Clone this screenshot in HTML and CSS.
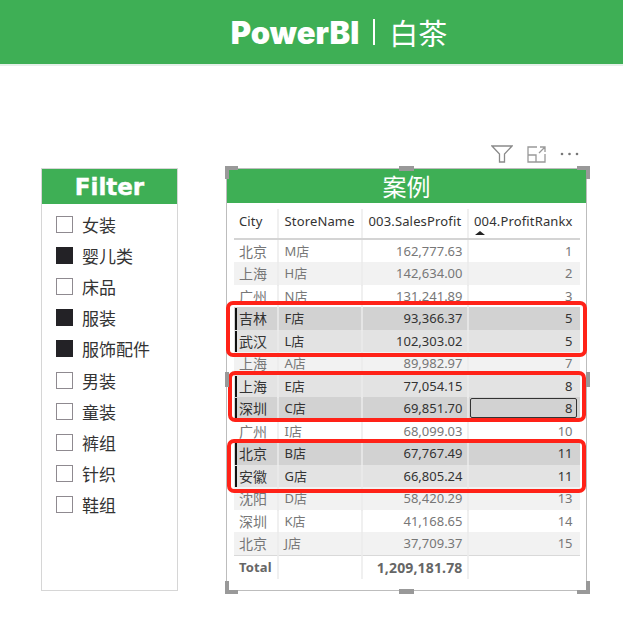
FILE: index.html
```html
<!DOCTYPE html>
<html lang="zh">
<head>
<meta charset="utf-8">
<title>PowerBI | 白茶</title>
<link rel="stylesheet" href="styles.css">
</head>
<body>
<header class="banner"><span class="brand">PowerBI</span><span class="pipe"></span><span class="brand-cn">白茶</span></header>
<main class="canvas">
  <section class="slicer">
    <h2 class="slicer-title">Filter</h2>
    <ul class="slicer-list">
      <li class="item"><span class="box"></span>女装</li>
      <li class="item"><span class="box on"></span>婴儿类</li>
      <li class="item"><span class="box"></span>床品</li>
      <li class="item"><span class="box on"></span>服装</li>
      <li class="item"><span class="box on"></span>服饰配件</li>
      <li class="item"><span class="box"></span>男装</li>
      <li class="item"><span class="box"></span>童装</li>
      <li class="item"><span class="box"></span>裤组</li>
      <li class="item"><span class="box"></span>针织</li>
      <li class="item"><span class="box"></span>鞋组</li>
    </ul>
  </section>
  <section class="visual">
    <div class="toolbar">
      <svg class="ico-filter" width="22" height="18" viewBox="0 0 22 18"><path d="M1 1H21L13.5 9V17H8.5V9Z" fill="none" stroke="#8a8a8a" stroke-width="1.3"/></svg>
      <svg class="ico-expand" width="19" height="17" viewBox="0 0 19 17"><path d="M10 1H1V16H18V8M1 9H9V16M12 7L18 1M13 1H18V6" fill="none" stroke="#999" stroke-width="1.3"/></svg>
      <svg class="ico-more" width="19" height="4" viewBox="0 0 19 4"><circle cx="2" cy="2" r="1.3" fill="#777"/><circle cx="9.5" cy="2" r="1.3" fill="#777"/><circle cx="17" cy="2" r="1.3" fill="#777"/></svg>
    </div>
    <h2 class="visual-title">案例</h2>
    <div class="grid">
      <div class="row head"><div class="c">City</div><div class="c">StoreName</div><div class="c">003.SalesProfit</div><div class="c sorted">004.ProfitRankx</div></div>
      <div class="row"><div class="c">北京</div><div class="c">M店</div><div class="c n">162,777.63</div><div class="c n">1</div></div>
      <div class="row alt"><div class="c">上海</div><div class="c">H店</div><div class="c n">142,634.00</div><div class="c n">2</div></div>
      <div class="row"><div class="c">广州</div><div class="c">N店</div><div class="c n">131,241.89</div><div class="c n">3</div></div>
      <div class="row dark"><div class="c">吉林</div><div class="c">F店</div><div class="c n">93,366.37</div><div class="c n">5</div></div>
      <div class="row light"><div class="c">武汉</div><div class="c">L店</div><div class="c n">102,303.02</div><div class="c n">5</div></div>
      <div class="row alt"><div class="c">上海</div><div class="c">A店</div><div class="c n">89,982.97</div><div class="c n">7</div></div>
      <div class="row light"><div class="c">上海</div><div class="c">E店</div><div class="c n">77,054.15</div><div class="c n">8</div></div>
      <div class="row dark"><div class="c">深圳</div><div class="c">C店</div><div class="c n">69,851.70</div><div class="c n focus">8</div></div>
      <div class="row"><div class="c">广州</div><div class="c">I店</div><div class="c n">68,099.03</div><div class="c n">10</div></div>
      <div class="row dark"><div class="c">北京</div><div class="c">B店</div><div class="c n">67,767.49</div><div class="c n">11</div></div>
      <div class="row light"><div class="c">安徽</div><div class="c">G店</div><div class="c n">66,805.24</div><div class="c n">11</div></div>
      <div class="row alt"><div class="c">沈阳</div><div class="c">D店</div><div class="c n">58,420.29</div><div class="c n">13</div></div>
      <div class="row"><div class="c">深圳</div><div class="c">K店</div><div class="c n">41,168.65</div><div class="c n">14</div></div>
      <div class="row alt"><div class="c">北京</div><div class="c">J店</div><div class="c n">37,709.37</div><div class="c n">15</div></div>
      <div class="row total"><div class="c">Total</div><div class="c"></div><div class="c n">1,209,181.78</div><div class="c n"></div></div>
    </div>
    <div class="mark mark-1"></div>
    <div class="mark mark-2"></div>
    <div class="mark mark-3"></div>
    <i class="corner tl"></i><i class="corner tr"></i><i class="corner bl"></i><i class="corner br"></i>
    <i class="grip top"></i><i class="grip bottom"></i><i class="grip left"></i><i class="grip right"></i>
  </section>
</main>
</body>
</html>
```
FILE: styles.css
```css
* { box-sizing: border-box; }
html, body { margin: 0; padding: 0; background: #fff; }
body {
  width: 623px;
  height: 642px;
  overflow: hidden;
  font-family: "Noto Sans", "Noto Sans CJK SC", sans-serif;
}
.banner {
  height: 66px;
  background: #3eaf55;
  border-bottom: 2px solid #e6f0ea;
  color: #fff;
  display: flex;
  align-items: center;
  justify-content: center;
  padding-left: 55px;
}
.brand {
  font-family: Inter, sans-serif;
  font-weight: 900;
  font-size: 31px;
}
.pipe {
  width: 2px;
  height: 26px;
  background: #fff;
  margin: 0 14px 0 14px;
}
.brand-cn {
  font-family: "Noto Sans CJK SC", sans-serif;
  font-size: 29px;
  font-weight: 400;
}
.canvas {
  display: flex;
  align-items: flex-start;
  gap: 48px;
  padding: 102px 0 0 41px;
}
.slicer {
  width: 137px;
  height: 423px;
  border: 1px solid #d6d6d6;
}
.slicer-title {
  margin: 0;
  height: 35px;
  background: #3eaf55;
  color: #fff;
  font-family: "DejaVu Sans", sans-serif;
  font-weight: 700;
  font-size: 23px;
  line-height: 37px;
  text-align: center;
  -webkit-text-stroke: 0.4px #fff;
}
.slicer-list {
  list-style: none;
  margin: 0;
  padding: 5px 0 0 14px;
}
.item {
  height: 31.1px;
  display: flex;
  align-items: center;
  gap: 9px;
  font-family: "Noto Sans CJK SC", sans-serif;
  font-size: 17px;
  color: #333;
}
.box {
  width: 17px;
  height: 17px;
  border: 1px solid #8f8a90;
  background: #fff;
  flex: none;
}
.box.on {
  background: #232226;
  border-color: #232226;
}
.visual {
  position: relative;
  width: 361px;
  height: 423px;
  border: 1.5px solid #bdbdbd;
}
.toolbar {
  position: absolute;
  left: 264px;
  top: -25px;
  width: 92px;
  height: 20px;
  display: flex;
  align-items: center;
  gap: 14px;
}
.ico-filter, .ico-expand, .ico-more { flex: none; }
.visual-title {
  margin: 0;
  height: 34px;
  background: #3eaf55;
  color: #fff;
  font-family: "Noto Sans CJK SC", sans-serif;
  font-weight: 400;
  font-size: 24px;
  line-height: 34px;
  text-align: center;
}
.grid {
  margin: 5.5px 0 0 6.5px;
  width: 346px;
  font-size: 13px;
}
.row {
  display: grid;
  grid-template-columns: 45.5px 84px 105.5px 110px;
  height: 22.5px;
  color: #777;
}
.row.alt { background: #f2f2f2; }
.row.dark { background: #d2d2d2; color: #333; }
.row.light { background: #e3e3e3; color: #333; }
.c {
  position: relative;
  padding: 0 5px 0 5.5px;
  line-height: 23.5px;
  white-space: nowrap;
  border-right: 2px solid rgba(235, 235, 235, 0.75);
  font-family: "Noto Sans", "Noto Sans CJK SC", sans-serif;
}
.c:first-child { font-size: 14px; }
.c:last-child { border-right: 0; }
.n { text-align: right; padding-right: 4px; }
.c.n:last-child { padding-right: 6px; }
.head {
  height: 31px;
  color: #333;
  border-bottom: 2px solid #d4d4d4;
}
.head .c { line-height: 25px; letter-spacing: 0.15px; font-size: 13px; }
.sorted::after {
  content: "";
  position: absolute;
  left: 6px;
  top: 22px;
  border-left: 5px solid transparent;
  border-right: 5px solid transparent;
  border-bottom: 4px solid #222;
}
.dark .c:first-child::before,
.light .c:first-child::before {
  content: "";
  position: absolute;
  left: 1px;
  top: 1px;
  bottom: 1px;
  width: 2.5px;
  background: #111;
}
.focus::after {
  content: "";
  position: absolute;
  left: 1px;
  right: 2px;
  top: 1px;
  bottom: 3px;
  border: 1px solid #333;
  border-radius: 2px;
}
.total {
  height: 22px;
  border-top: 1px solid #d9d9d9;
  color: #666;
  font-weight: 700;
}
.total .c { font-size: 14px; letter-spacing: 0.15px; }
.total .c:first-child { font-size: 13px; }
.mark {
  position: absolute;
  border: 4px solid #ff2218;
  border-radius: 7px;
  pointer-events: none;
}
.mark-1 { left: -1.5px; top: 131.5px; width: 361px; height: 56px; }
.mark-2 { left: 0.5px; top: 201.5px; width: 358px; height: 51px; }
.mark-3 { left: 0; top: 269.5px; width: 359px; height: 54px; }
.corner {
  position: absolute;
  width: 13px;
  height: 13px;
  border: 0 solid #999;
}
.corner.tl { left: -2px; top: -3.5px; border-width: 4px 0 0 4px; }
.corner.tr { right: -3.5px; top: -3.5px; border-width: 4px 4px 0 0; }
.corner.bl { left: -2px; bottom: -3.5px; border-width: 0 0 4px 4px; }
.corner.br { right: -3.5px; bottom: -3.5px; border-width: 0 4px 4px 0; }
.grip {
  position: absolute;
  background: #999;
}
.grip.top { left: 171.5px; top: -3.5px; width: 15px; height: 5px; }
.grip.bottom { left: 171.5px; bottom: -3.5px; width: 15px; height: 5px; }
.grip.left { left: -2px; top: 202.5px; width: 4px; height: 15px; }
.grip.right { right: -3.5px; top: 202.5px; width: 4px; height: 15px; }
```
